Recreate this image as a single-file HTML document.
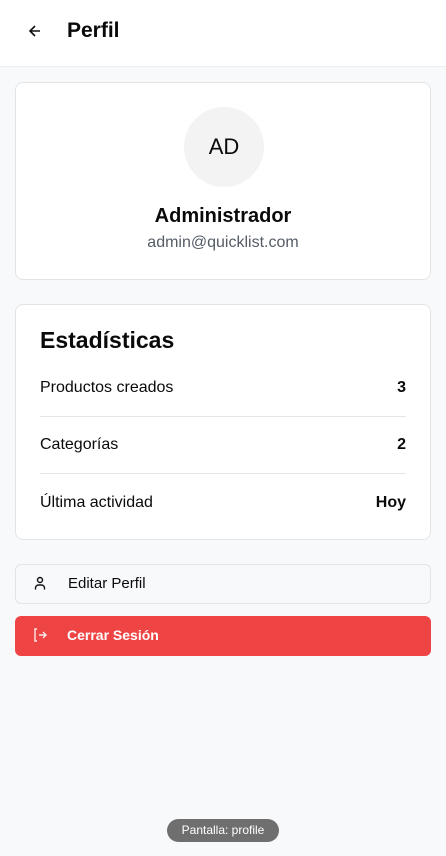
<!DOCTYPE html>
<html><head><meta charset="utf-8"><style>
*{box-sizing:border-box;margin:0;padding:0}
body{width:446px;height:856px;background:#f8f9fb;font-family:"Liberation Sans",sans-serif;color:#0a0a0a;position:relative;overflow:hidden}
.hdr{height:67px;background:#fff;border-bottom:1px solid #eceef0;position:relative}
.hdr svg{position:absolute;left:28px;top:24px}
.hdr h1{position:absolute;left:67px;top:19px;font-size:21px;font-weight:bold}
.card{position:absolute;left:15px;width:416px;background:#fff;border:1px solid #e3e4e6;border-radius:8px}
.av{position:absolute;left:168px;top:24px;width:80px;height:80px;border-radius:50%;background:#f3f3f3;text-align:center;line-height:80px;font-size:22px}
.row{position:absolute;left:24px;right:24px;height:57px;font-size:16px;display:flex;justify-content:space-between;align-items:center}
.btn{position:absolute;left:15px;width:416px;height:40px;border-radius:6px;font-size:14px;font-weight:bold}
.btn span{position:absolute;left:52px;top:11px}
.btn svg{position:absolute;left:17px;top:11px}
</style></head><body>
<div class="hdr"><svg width="14" height="14" viewBox="0 0 14 14" fill="none" stroke="#111" stroke-width="1.6"><path d="M12 7H2M7 2L2 7l5 5"/></svg><h1>Perfil</h1></div>
<div class="card" style="top:82px;height:198px">
<div class="av">AD</div>
<div style="position:absolute;top:122px;width:100%;text-align:center;font-size:20px;font-weight:bold">Administrador</div>
<div style="position:absolute;top:151px;width:100%;text-align:center;font-size:16px;color:#555c66">admin@quicklist.com</div>
</div>
<div class="card" style="top:304px;height:236px">
<div style="position:absolute;left:24px;top:22px;font-size:23px;font-weight:bold">Estadísticas</div>
<div class="row" style="top:55px;border-bottom:1px solid #e5e5e5"><span>Productos creados</span><b>3</b></div>
<div class="row" style="top:112px;border-bottom:1px solid #e5e5e5"><span>Categorías</span><b>2</b></div>
<div class="row" style="top:169px"><span>Última actividad</span><b>Hoy</b></div>
</div>
<div class="btn" style="top:564px;border:1px solid #e3e4e6;background:#f8f9fb"><svg width="14" height="14" viewBox="0 0 14 14" fill="none" stroke="#111" stroke-width="1.4"><circle cx="7" cy="4" r="2.5"/><path d="M2.5 13.5v-1.5a3 3 0 0 1 3-3h3a3 3 0 0 1 3 3v1.5"/></svg><span style="font-weight:normal;font-size:15px;top:10px">Editar Perfil</span></div>
<div class="btn" style="top:616px;background:#ef4444;color:#fff"><svg width="16" height="16" viewBox="0 0 16 16" fill="none" stroke="#fde8e8" stroke-width="1.4"><path d="M5 2H3v12h2M7 8h7M11 5l3 3-3 3"/></svg><span style="top:11px">Cerrar Sesión</span></div>
<div style="position:absolute;left:167px;top:819px;width:112px;height:23px;border-radius:12px;background:#6f6f6f;color:#fff;font-size:12px;text-align:center;line-height:23px">Pantalla: profile</div>
</body></html>
